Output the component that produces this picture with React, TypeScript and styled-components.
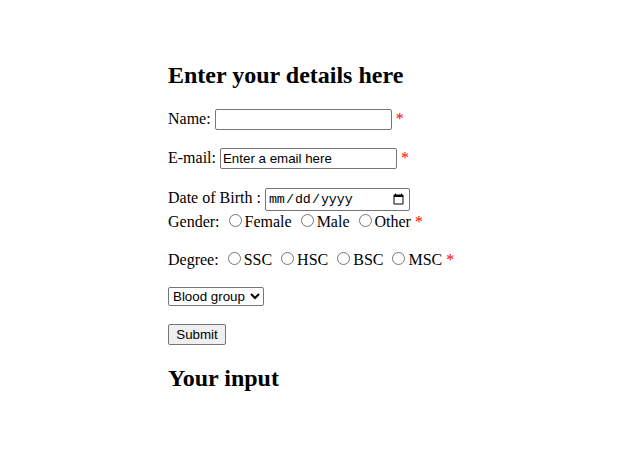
import React from "react";
import styled, { createGlobalStyle } from "styled-components";

const GlobalStyle = createGlobalStyle`
  body {
    margin: 8px;
    background: #ffffff;
    color: #000000;
    font-family: "Liberation Serif", "Times New Roman", serif;
    font-size: 16px;
  }
`;

const Page = styled.main`
  display: flex;
  justify-content: center;
  padding-top: 34px;
`;

const Form = styled.form`
  width: 306px;
`;

const Heading = styled.h2`
  font-size: 24px;
  font-weight: bold;
  margin: 20px 0;
`;

const Field = styled.p`
  margin: 18px 0;
  white-space: nowrap;
`;

const Stack = styled.div`
  margin: 19px 0 18px;
  white-space: nowrap;
`;

const TextInput = styled.input`
  box-sizing: border-box;
  font-family: "Liberation Sans", Arial, sans-serif;
  font-size: 13.33px;
  width: 177px;
  height: 21px;
  padding: 1px 2px;
  border: 1px solid #767676;
  border-radius: 2px;
  color: #000;
`;

const DateInput = styled.input`
  box-sizing: border-box;
  font-family: "Liberation Mono", monospace;
  font-size: 13.33px;
  width: 145px;
  height: 23px;
  padding: 1px 2px;
  border: 1px solid #767676;
  border-radius: 2px;
`;

const Required = styled.span`
  color: #ff0000;
`;

const Radio = styled.input`
  margin: 3px 3px 0 5px;
  width: 13px;
  height: 13px;
  vertical-align: baseline;
`;

const Select = styled.select`
  box-sizing: border-box;
  font-family: "Liberation Sans", Arial, sans-serif;
  font-size: 13.33px;
  width: 96px;
  height: 19px;
  border: 1px solid #767676;
  border-radius: 2px;
  padding: 0;
  color: #000;
  background: #fff;
`;

const Button = styled.button`
  box-sizing: border-box;
  font-family: "Liberation Sans", Arial, sans-serif;
  font-size: 13.33px;
  width: 58px;
  height: 21px;
  padding: 1px 6px;
  border: 1px solid #767676;
  border-radius: 2px;
  background: #efefef;
  color: #000;
`;

const genders = ["Female", "Male", "Other"];
const degrees = ["SSC", "HSC", "BSC", "MSC"];

export default function App() {
  return (
    <>
      <GlobalStyle />
      <Page>
        <Form onSubmit={(e) => e.preventDefault()}>
          <Heading>Enter your details here</Heading>
          <Field>
            Name: <TextInput type="text" /> <Required>*</Required>
          </Field>
          <Field>
            E-mail: <TextInput type="email" defaultValue="Enter a email here" />{" "}
            <Required>*</Required>
          </Field>
          <Stack>
            Date of Birth : <DateInput type="date" />
            <br />
            Gender:&nbsp;
            {genders.map((g) => (
              <React.Fragment key={g}>
                <Radio type="radio" name="gender" value={g} />
                {g}
                {g !== "Other" ? <>&nbsp;</> : " "}
              </React.Fragment>
            ))}
            <Required>*</Required>
          </Stack>
          <Field>
            Degree:&nbsp;
            {degrees.map((d) => (
              <React.Fragment key={d}>
                <Radio type="radio" name="degree" value={d} />
                {d}
                {d !== "MSC" ? <>&nbsp;</> : " "}
              </React.Fragment>
            ))}
            <Required>*</Required>
          </Field>
          <Field>
            <Select defaultValue="">
              <option value="">Blood group</option>
              <option>A+</option>
              <option>A-</option>
              <option>B+</option>
              <option>B-</option>
              <option>AB+</option>
              <option>AB-</option>
              <option>O+</option>
              <option>O-</option>
            </Select>
          </Field>
          <Field>
            <Button type="submit">Submit</Button>
          </Field>
          <Heading>Your input</Heading>
        </Form>
      </Page>
    </>
  );
}
